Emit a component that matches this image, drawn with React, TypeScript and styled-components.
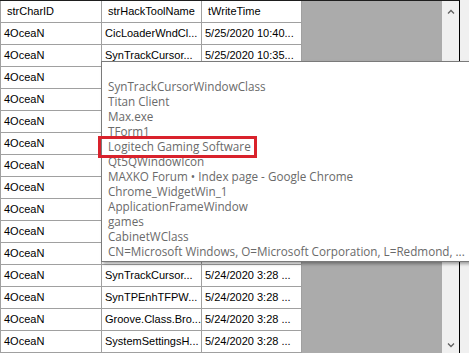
import styled, { createGlobalStyle } from 'styled-components'

const GlobalStyle = createGlobalStyle`
  html, body {
    margin: 0;
    padding: 0;
    overflow: hidden;
    background: #f0f0f0;
  }
`

const Window = styled.div`
  position: relative;
  width: 469px;
  height: 353px;
  overflow: hidden;
  background: #f0f0f0;
  font-family: "Liberation Sans", Arial, sans-serif;
`

const Frame = styled.div`
  display: flex;
  width: 460px;
  height: 353px;
  box-sizing: border-box;
  border-top: 1px solid #1e1e1e;
  border-right: 1px solid #000;
`

const GridArea = styled.div`
  flex: 1;
  display: flex;
  background: #ababab;
`

const Table = styled.div`
  display: flex;
  flex-direction: column;
  border-left: 1px solid #a0a0a0;
  background: #fff;
  align-self: flex-start;
`

const Row = styled.div`
  display: flex;
  height: 22px;
`

const Cell = styled.div<{ $w: number; $head?: boolean }>`
  width: ${p => p.$w}px;
  box-sizing: border-box;
  padding-left: ${p => (p.$head ? 6 : 3)}px;
  border-right: 1px solid #a0a0a0;
  border-bottom: 1px solid #a0a0a0;
  font-size: 11px;
  color: #000;
  line-height: 21px;
  white-space: nowrap;
  overflow: hidden;
`

const ScrollBar = styled.div`
  width: 17px;
  display: flex;
  flex-direction: column;
  justify-content: space-between;
  align-items: center;
  background: #f0f0f0;
  padding: 8px 0 5px;
  box-sizing: border-box;
`

const Popup = styled.div`
  position: absolute;
  left: 101px;
  top: 61px;
  width: 420px;
  height: 201px;
  box-sizing: border-box;
  background: #fff;
  border: 1px solid #7a7a7a;
  box-shadow: 2px 2px 3px rgba(0, 0, 0, 0.35);
  padding: 2px 6px;
  font-family: "Open Sans", "Noto Sans", sans-serif;
  font-size: 11.7px;
  line-height: 15px;
  color: #6a6a6a;
`

const Line = styled.div`
  height: 15px;
  white-space: nowrap;
`

const Highlight = styled.div`
  position: absolute;
  left: 98px;
  top: 136px;
  width: 159px;
  height: 22px;
  border: 3px solid #d9222c;
  box-sizing: border-box;
`

const cols = [101, 100, 100]

// rows 3-11 sit under the tooltip, so only their first column shows
const rows: [string, string, string][] = [
  ['4OceaN', 'CicLoaderWndCl...', '5/25/2020 10:40...'],
  ['4OceaN', 'SynTrackCursor...', '5/25/2020 10:35...'],
  ['4OceaN', '', ''],
  ['4OceaN', '', ''],
  ['4OceaN', '', ''],
  ['4OceaN', '', ''],
  ['4OceaN', '', ''],
  ['4OceaN', '', ''],
  ['4OceaN', '', ''],
  ['4OceaN', '', ''],
  ['4OceaN', '', ''],
  ['4OceaN', 'SynTrackCursor...', '5/24/2020 3:28 ...'],
  ['4OceaN', 'SynTPEnhTFPW...', '5/24/2020 3:28 ...'],
  ['4OceaN', 'Groove.Class.Bro...', '5/24/2020 3:28 ...'],
  ['4OceaN', 'SystemSettingsH...', '5/24/2020 3:28 ...'],
]

const popupLines = [
  '',
  'SynTrackCursorWindowClass',
  'Titan Client',
  'Max.exe',
  'TForm1',
  'Logitech Gaming Software',
  'Qt5QWindowIcon',
  'MAXKO Forum \u2022 Index page - Google Chrome',
  'Chrome_WidgetWin_1',
  'ApplicationFrameWindow',
  'games',
  'CabinetWClass',
  'CN=Microsoft Windows, O=Microsoft Corporation, L=Redmond, ...',
]

function Chevron ({ up }: { up?: boolean }) {
  return (
    <svg width="8" height="5" viewBox="0 0 8 5">
      <path
        d={up ? 'M1 4.5 L4 1.5 L7 4.5' : 'M1 0.5 L4 3.5 L7 0.5'}
        fill="none"
        stroke="#606060"
        strokeWidth="1.3"
      />
    </svg>
  )
}

export default function App () {
  return (
    <Window>
      <GlobalStyle />
      <Frame>
        <GridArea>
          <Table>
            <Row>
              <Cell $w={cols[0]} $head>strCharID</Cell>
              <Cell $w={cols[1]} $head>strHackToolName</Cell>
              <Cell $w={cols[2]} $head>tWriteTime</Cell>
            </Row>
            {rows.map((r, i) => (
              <Row key={i}>
                {r.map((v, j) => (
                  <Cell key={j} $w={cols[j]}>{v}</Cell>
                ))}
              </Row>
            ))}
          </Table>
        </GridArea>
        <ScrollBar>
          <Chevron up />
          <Chevron />
        </ScrollBar>
      </Frame>
      <Popup>
        {popupLines.map((l, i) => (
          <Line key={i}>{l}</Line>
        ))}
      </Popup>
      <Highlight />
    </Window>
  )
}
